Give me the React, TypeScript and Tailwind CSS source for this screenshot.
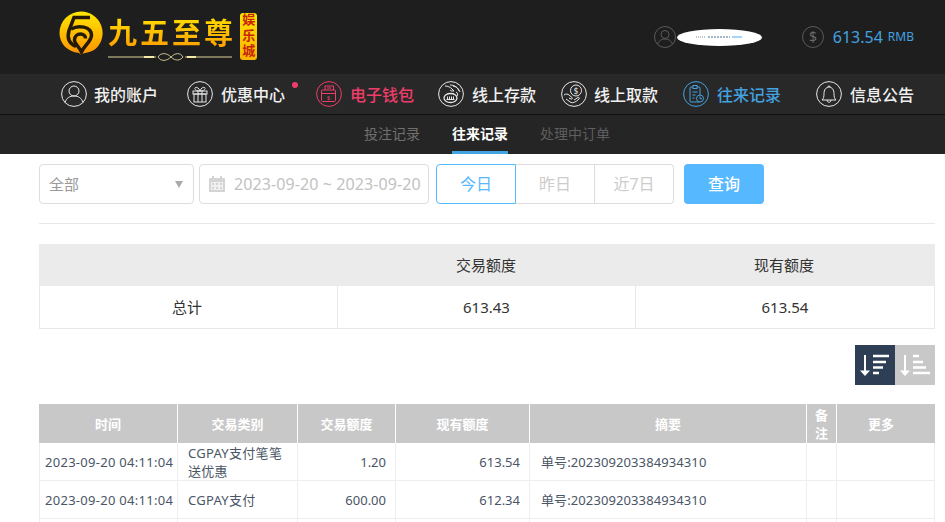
import React from "react";

const FONT = "[font-family:'Noto_Sans','Noto_Sans_CJK_SC',sans-serif]";

const Ring = ({ children, color = "#e8e8e8" }: { children?: React.ReactNode; color?: string }) => (
  <svg width="26" height="26" viewBox="0 0 26 26" fill="none" stroke={color} strokeWidth="1" className="shrink-0">
    <circle cx="13" cy="13" r="12.4" />
    {children}
  </svg>
);

const icons: Record<string, React.ReactNode> = {
  user: (
    <Ring>
      <circle cx="13" cy="10" r="5" />
      <path d="M4 21.500c1.500-4.500 4.500-6.500 9-6.500s7.500 2 9 6.500" />
    </Ring>
  ),
  gift: (
    <Ring>
      <rect x="6" y="10" width="14" height="3" />
      <rect x="7" y="13" width="12" height="8" />
      <path d="M11 10v11M15 10v11M13 10c-1-3-3-4-4.500-3.500S8 10 13 10c5 0 6-3 4.500-3.500S14 7 13 10z" />
    </Ring>
  ),
  wallet: (
    <Ring color="#ee3d6a">
      <path d="M9 9V5h8.500v4" />
      <rect x="5.500" y="9" width="14" height="11.500" rx="1" />
      <path d="M5.500 12.500h14M11 7h4" />
      <text x="12.500" y="19" fontSize="6" fill="#ee3d6a" stroke="none" textAnchor="middle">$</text>
    </Ring>
  ),
  deposit: (
    <Ring>
      <path d="M7 5c3 0 5 1 7 3l2 2c-2 0-3 0-4-1M12 4c4 0 8 2 10 7M15 5c3 .5 5 2 6 5M18 11c2 1 2 3 1 4" />
      <ellipse cx="12.500" cy="17" rx="6.500" ry="4.500" strokeWidth="1.300" />
      <path d="M8.500 18.500h8M9.500 15.500v3M11.500 15.500v3M13.500 15.500v3M15.500 15.500v3" />
    </Ring>
  ),
  withdraw: (
    <Ring>
      <circle cx="15" cy="9.500" r="5.500" />
      <text x="15" y="12.500" fontSize="8" fill="#e8e8e8" stroke="none" textAnchor="middle">$</text>
      <path d="M3 14c2-1.500 4-1 5 0l3 2.500c1 .8 0 2-1 1.500l-2-1M5 18l5 3.500c2 .8 5-.5 8-3.500 1-1 0-2-1-1.500l-4 2.500" />
    </Ring>
  ),
  record: (
    <Ring color="#44a2e0">
      <rect x="7" y="6" width="10" height="15" rx="1" />
      <rect x="10" y="4.500" width="4" height="3" fill="#282828" />
      <path d="M9.500 11h5M9.500 14h3M9.500 17h2" />
      <circle cx="17" cy="17.500" r="3.500" fill="#282828" />
      <path d="M17 15.500v2.200h2" />
    </Ring>
  ),
  bell: (
    <Ring>
      <path d="M6 19c1.500-1.500 2-3 2-6.500C8 9 10 6 13 6s5 3 5 6.500c0 3.500.5 5 2 6.500z" />
      <path d="M11 19c0 3 4 3 4 0" />
      <path d="M12 6c0-1.500 2-1.500 2 0" />
    </Ring>
  ),
};

const navItems = [
  { key: "user", label: "我的账户", cls: "ml-[61px] gap-[7px] text-[#f0f0f0]" },
  { key: "gift", label: "优惠中心", cls: "ml-[29px] gap-[8px] text-[#f0f0f0]", dot: true },
  { key: "wallet", label: "电子钱包", cls: "ml-[31px] gap-[8px] text-[#ee3d6a]" },
  { key: "deposit", label: "线上存款", cls: "ml-[24px] gap-[8px] text-[#f0f0f0]" },
  { key: "withdraw", label: "线上取款", cls: "ml-[25px] gap-[7px] text-[#f0f0f0]" },
  { key: "record", label: "往来记录", cls: "ml-[25px] gap-[8px] text-[#44a2e0]" },
  { key: "bell", label: "信息公告", cls: "ml-[35px] gap-[8px] text-[#f0f0f0]" },
];

const Logo = () => (
  <div className="ml-[59px] flex items-start">
    <svg width="44" height="44" viewBox="0 0 44 44" className="mt-[11px] shrink-0">
      <defs>
        <linearGradient id="lg" x1="0" y1="0" x2="0" y2="1">
          <stop offset="0" stopColor="#ffe800" />
          <stop offset="1" stopColor="#fd9200" />
        </linearGradient>
      </defs>
      <path d="M22 .5a21.500 21.500 0 0 1 15 37c-3 2.500-7 4-12 4.800L22 44l-2-2C8 41 .5 32 .5 22A21.500 21.500 0 0 1 22 .5z" fill="url(#lg)" />
      <path d="M31 6.500H15l-5 13c-2 7 0 13 7 16" fill="none" stroke="#241a06" strokeWidth="3.500" />
      <path d="M12 18c7-4 20-3 20.500 6 .3 6-7 10-10 17-2-5-7-8-7-12 0-4 3-6 6-6 3 0 5 2 5 4.500" fill="none" stroke="#241a06" strokeWidth="3.500" />
    </svg>
    <div className="ml-[5px] mt-[12px] flex w-[125px] flex-col">
      <div className="flex h-[39px] items-center justify-between bg-linear-to-b from-[#ffe600] to-[#fb9a00] bg-clip-text text-[29px] font-bold leading-[39px] text-transparent [font-family:'Noto_Sans_CJK_SC',sans-serif]">
        <span>九</span><span>五</span><span>至</span><span>尊</span>
      </div>
      <svg width="125" height="10" viewBox="0 0 125 10" className="mt-[1px]" fill="none" stroke="#f5e9a8">
        <path d="M0 5h48M77 5h47" strokeWidth=".9" />
        <path d="M36 5h10M79 5h9" strokeWidth="1.800" />
        <path d="M50 5c3-5 9-4 13 0s9 4 12 0c-3-5-8-4-12 0s-10 5-13 0z" strokeWidth=".8" />
      </svg>
    </div>
    <div className="ml-[7px] mt-[13px] flex h-[47px] w-[17px] items-center justify-center rounded-[3px] bg-linear-to-b from-[#ffe600] to-[#f9b200] text-[13px] font-bold tracking-[2.500px] text-[#c8240c] [font-family:'Noto_Sans_CJK_SC',sans-serif] [writing-mode:vertical-rl]">
      娱乐城
    </div>
  </div>
);

const SortIcon = ({ asc }: { asc?: boolean }) => (
  <svg width="40" height="40" viewBox="0 0 40 40" fill="none" stroke="#fff">
    <path d="M10 10v16" strokeWidth="2" />
    <path d="M5 25.500h10l-5 5.500z" fill="#fff" stroke="none" />
    {asc
      ? <path d="M18 11h6M18 17h10M18 22.500h13M18 28h17" strokeWidth="2.400" />
      : <path d="M18 11h16M18 17h13M18 22.500h10M18 28h6" strokeWidth="2.400" />}
  </svg>
);

const th = "border-r border-white text-center align-middle text-[13px] font-bold leading-[18px] text-white last:border-r-0";
const td = "border-r border-b border-[#eeeeee] align-middle text-[13px] leading-[18px] text-[#4a5566]";

const rows = [
  { time: "2023-09-20 04:11:04", kind: "CGPAY支付笔笔送优惠", amount: "1.20", bal: "613.54", memo: "单号:202309203384934310" },
  { time: "2023-09-20 04:11:04", kind: "CGPAY支付", amount: "600.00", bal: "612.34", memo: "单号:202309203384934310" },
  { time: "", kind: "", amount: "", bal: "", memo: "" },
];

export default function App() {
  return (
    <div className={`h-[522px] w-[945px] overflow-hidden bg-white ${FONT}`}>
      <header>
        <div className="flex h-[74px] items-start justify-between bg-[#1e1e1e]">
          <Logo />
          <div className="mr-[31px] mt-[26px] flex items-center">
            <svg width="22" height="22" viewBox="0 0 22 22" fill="none" stroke="#5a5a5a">
              <circle cx="11" cy="11" r="10.500" />
              <circle cx="11" cy="8.500" r="4" />
              <path d="M3.500 18c1.500-3.500 4-5 7.500-5s6 1.500 7.500 5" />
            </svg>
            <div className="relative ml-px flex h-[17px] w-[85px] items-center justify-center rounded-[50%] bg-white">
              <svg width="46" height="5" viewBox="0 0 46 5" fill="none" strokeWidth="1">
                <path d="M0 2h10" stroke="#8a8a8a" strokeDasharray="1 1" />
                <path d="M12 2h22" stroke="#4a6f9a" strokeDasharray="2 1" />
                <path d="M36 2h10" stroke="#55aaee" />
              </svg>
            </div>
            <svg width="22" height="22" viewBox="0 0 22 22" fill="none" stroke="#5a5a5a" className="ml-[40px]">
              <circle cx="11" cy="11" r="10.500" />
              <text x="11" y="16" fontSize="14" fill="#6a6a6a" stroke="none" textAnchor="middle">$</text>
            </svg>
            <span className="ml-[9px] text-[16px] leading-[22px] text-[#44a2e0]">613.54</span>
            <span className="ml-[5px] text-[12px] leading-[22px] text-[#44a2e0]">RMB</span>
          </div>
        </div>
        <nav className="flex h-[41px] items-center border-b border-[#111111] bg-[#282828] pb-[1px]">
          {navItems.map((n) => (
            <div key={n.key} className={`relative flex items-center ${n.cls}`}>
              {icons[n.key]}
              <span className="mt-[2px] whitespace-nowrap text-[16px] font-medium leading-[26px]">{n.label}</span>
              {n.dot && <span className="absolute right-[-13px] top-[2px] h-[6px] w-[6px] rounded-full bg-[#ee3d6a]" />}
            </div>
          ))}
        </nav>
        <div className="flex h-[39px] justify-center gap-[32px] bg-[#252525] pl-[29px] text-[14px]">
          <a className="flex items-center pb-[2px] text-[#707070]">投注记录</a>
          <a className="flex items-center border-b-[3px] border-[#44a2e0] font-bold text-white">往来记录</a>
          <a className="flex items-center pb-[2px] text-[#5e5e5e]">处理中订单</a>
        </div>
      </header>

      <main className="pl-[39px] pr-[10px] pt-[10px]">
        <div className="flex h-[40px] items-stretch">
          <div className="flex w-[155px] items-center justify-between rounded-[4px] border border-[#dddddd] pl-[9px] pr-[10px] text-[15px] text-[#999999]">
            <span>全部</span>
            <span className="h-0 w-0 border-x-[4px] border-t-[7px] border-x-transparent border-t-[#aaaaaa]" />
          </div>
          <div className="ml-[5px] flex w-[230px] items-center rounded-[4px] border border-[#dddddd] pl-[9px] text-[16px] tracking-[.1px] text-[#c2c2c2]">
            <svg width="16" height="16" viewBox="0 0 16 16" fill="#d4d4d4" className="mr-[9px] shrink-0">
              <rect x="0" y="2" width="16" height="14" rx="1" />
              <rect x="3" y="0" width="2" height="4" />
              <rect x="11" y="0" width="2" height="4" />
              <path d="M2 6h12v8H2z" fill="#f0f0f0" />
              <path d="M3 7h2v2H3zM7 7h2v2H7zM11 7h2v2h-2zM3 11h2v2H3zM7 11h2v2H7zM11 11h2v2h-2z" />
            </svg>
            <span className="whitespace-nowrap">2023-09-20 ~ 2023-09-20</span>
          </div>
          <div className="ml-[7px] flex text-[16px]">
            <div className="flex w-[80px] items-center justify-center rounded-l-[4px] border border-[#56b8ff] text-[#56b8ff]">今日</div>
            <div className="flex w-[79px] items-center justify-center border-y border-r border-[#dddddd] text-[#cccccc]">昨日</div>
            <div className="flex w-[79px] items-center justify-center rounded-r-[4px] border-y border-r border-[#dddddd] text-[#cccccc]">近7日</div>
          </div>
          <button className="ml-[10px] flex w-[80px] items-center justify-center rounded-[4px] bg-[#56b8ff] text-[16px] font-medium text-white">查询</button>
        </div>

        <div className="mt-[19px] h-px w-[896px] bg-[#e8e8e8]" />

        <div className="mt-[20px] w-[896px] text-[15px] text-[#333333]">
          <div className="grid h-[42px] grid-cols-[298px_298px_300px] items-center bg-[#ebebeb] text-center">
            <span />
            <span>交易额度</span>
            <span className="pr-[2px]">现有额度</span>
          </div>
          <div className="grid h-[43px] grid-cols-[298px_298px_298px] border-x border-b border-[#e8e8e8] text-center">
            <span className="flex items-center justify-center border-r border-[#e8e8e8] pr-[3px]">总计</span>
            <span className="flex items-center justify-center border-r border-[#e8e8e8]">613.43</span>
            <span className="flex items-center justify-center">613.54</span>
          </div>
        </div>

        <div className="mt-[16px] flex w-[896px] justify-end">
          <div className="h-[40px] w-[40px] bg-[#2e3f55]"><SortIcon /></div>
          <div className="h-[40px] w-[40px] bg-[#c8c8c8]"><SortIcon asc /></div>
        </div>

        <table className="mt-[19px] w-[896px] table-fixed border-separate border-spacing-0">
          <colgroup>
            <col className="w-[139px]" />
            <col className="w-[120px]" />
            <col className="w-[98px]" />
            <col className="w-[134px]" />
            <col className="w-[277px]" />
            <col className="w-[30px]" />
            <col className="w-[98px]" />
          </colgroup>
          <thead>
            <tr className="h-[39px] bg-[#c8c8c8]">
              <th className={th}>时间</th>
              <th className={th}>交易类别</th>
              <th className={th}>交易额度</th>
              <th className={th}>现有额度</th>
              <th className={th}>摘要</th>
              <th className={`${th} px-[6px]`}>备注</th>
              <th className={`${th} pr-[10px]`}>更多</th>
            </tr>
          </thead>
          <tbody>
            {rows.map((r, i) => (
              <tr key={i} className="h-[38px]">
                <td className={`${td} whitespace-nowrap border-l pl-[5px] tracking-[.28px]`}>{r.time}</td>
                <td className={`${td} pl-[10px] pr-[6px] tracking-[.3px]`}>{r.kind}</td>
                <td className={`${td} pr-[9px] text-right`}>{r.amount}</td>
                <td className={`${td} pr-[9px] text-right`}>{r.bal}</td>
                <td className={`${td} pl-[11px] tracking-[.1px]`}>{r.memo}</td>
                <td className={td} />
                <td className={td} />
              </tr>
            ))}
          </tbody>
        </table>
      </main>
    </div>
  );
}
